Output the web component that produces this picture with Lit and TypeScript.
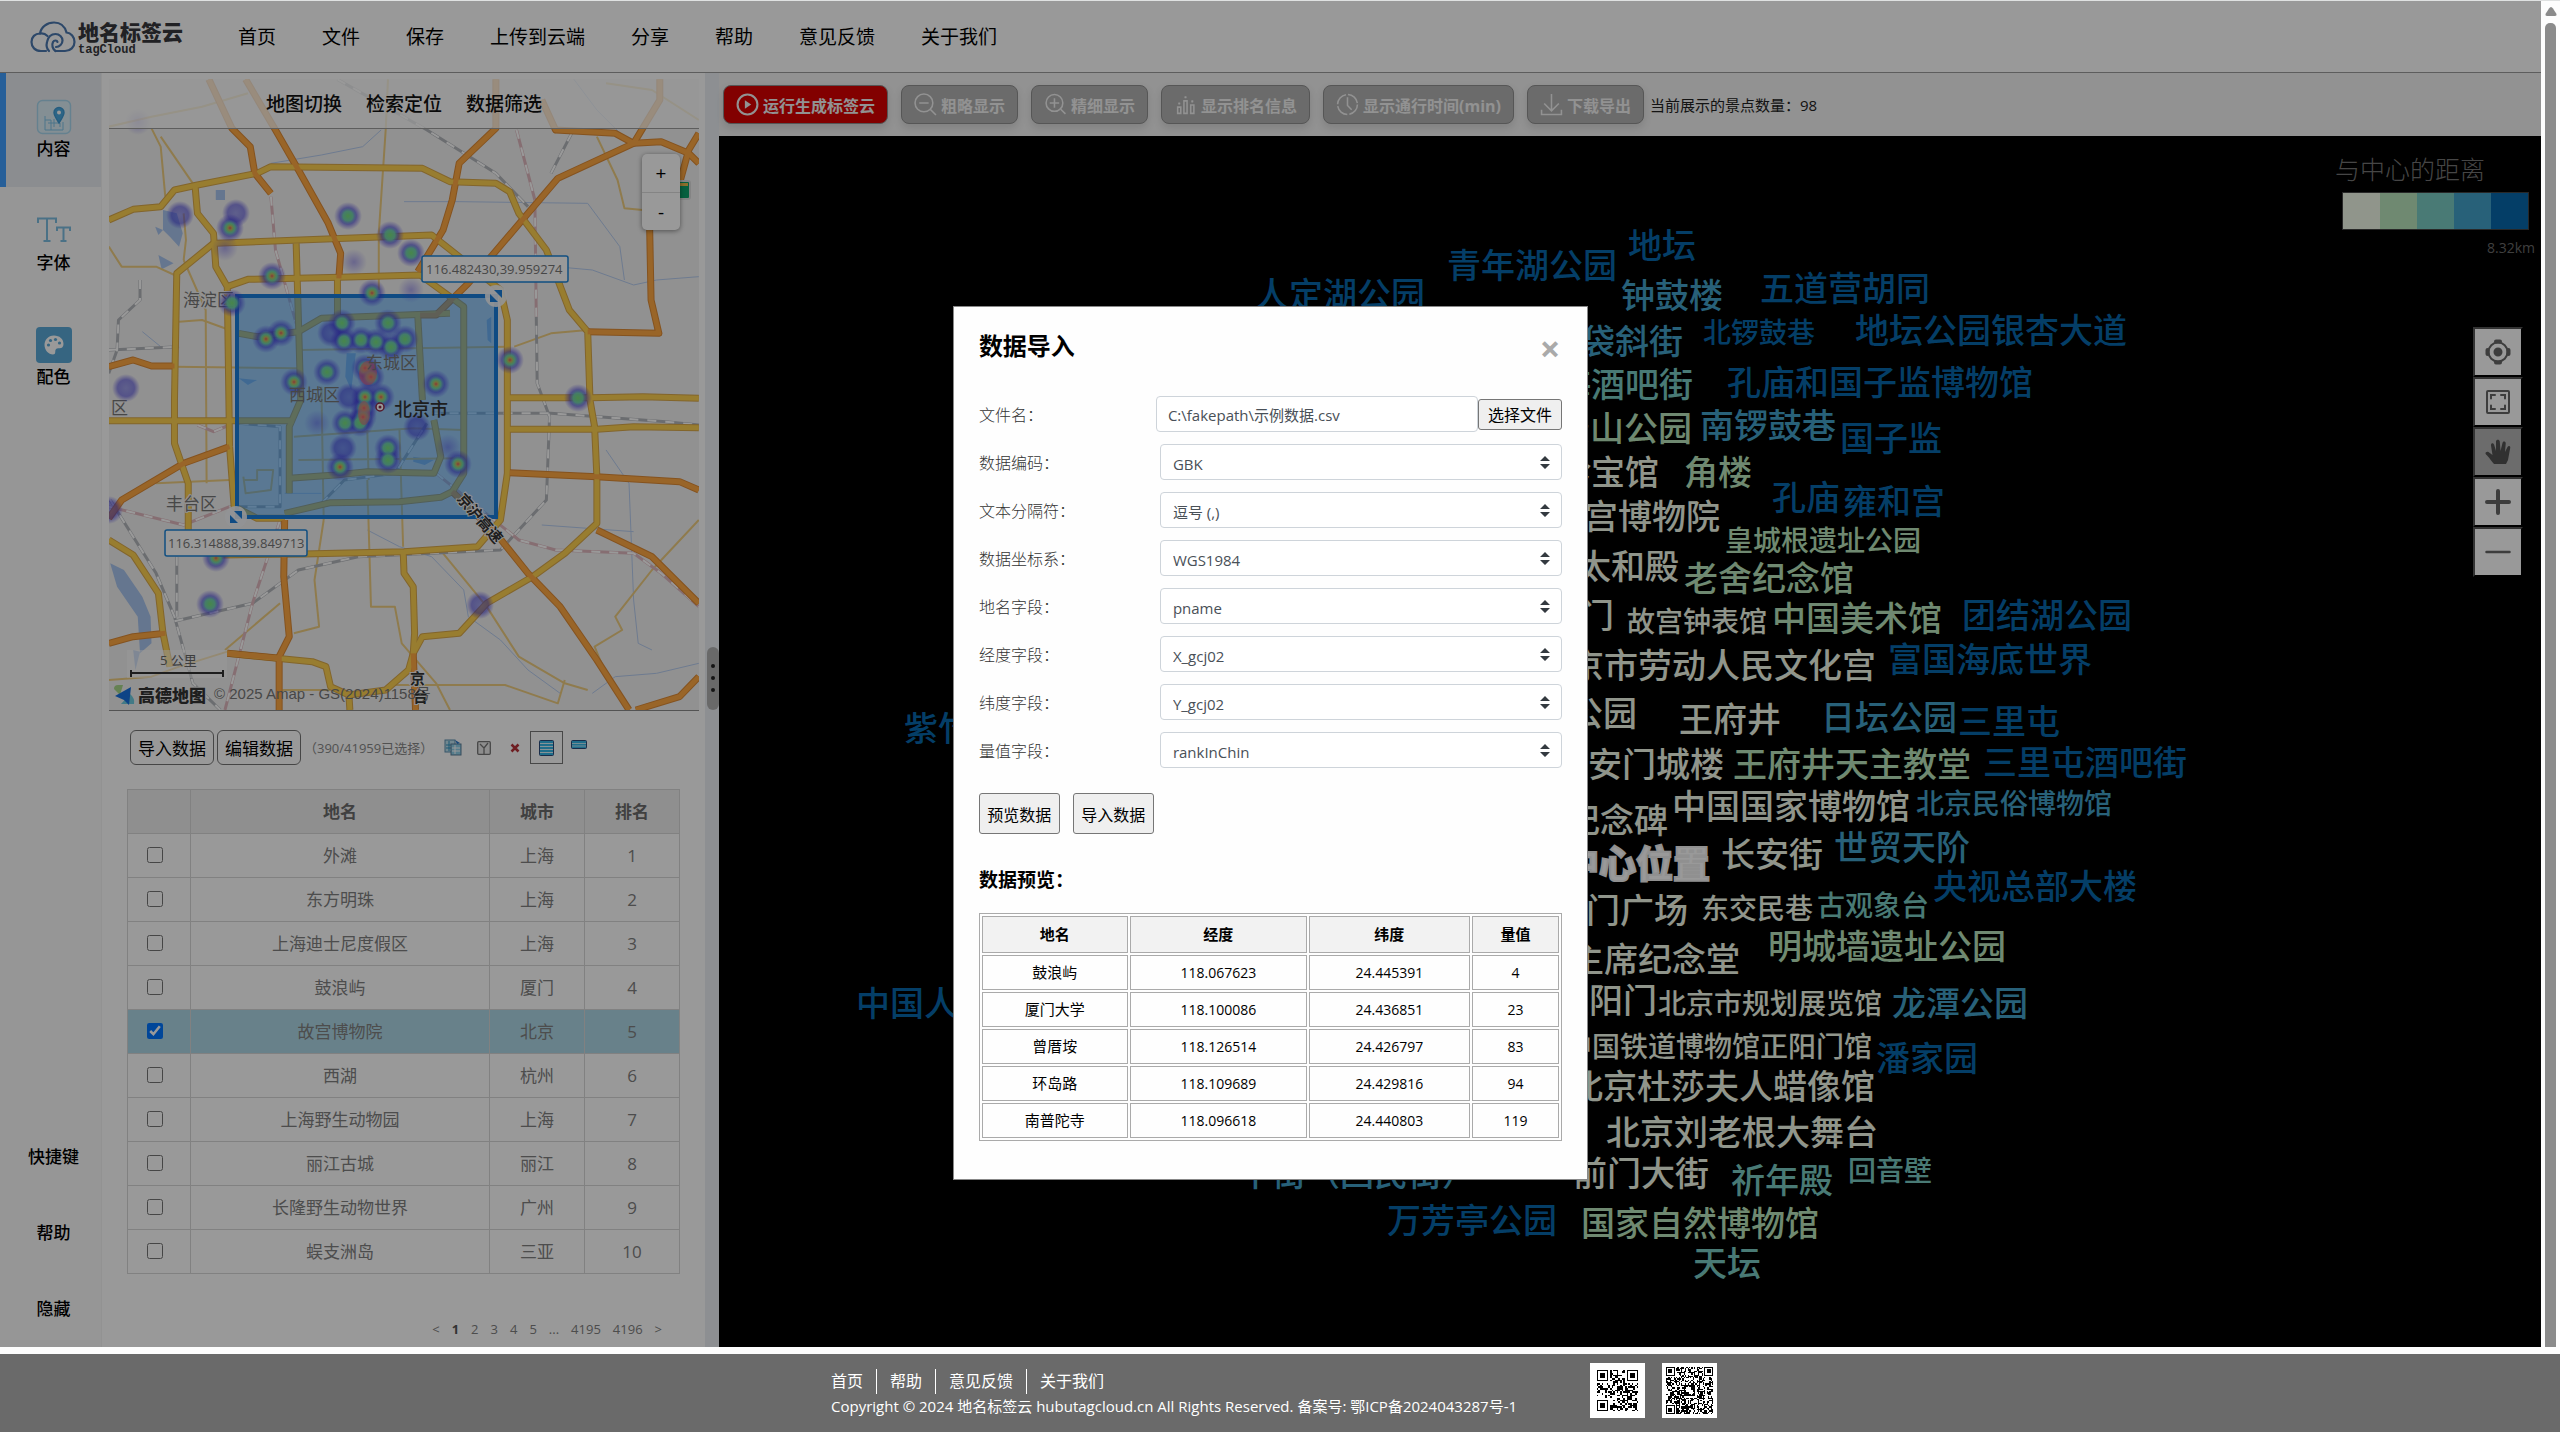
import { LitElement, html, svg, css } from "lit";
import { customElement } from "lit/decorators.js";
import { classMap } from "lit/directives/class-map.js";
import { styleMap } from "lit/directives/style-map.js";

const base = css`
  *, *::before, *::after { box-sizing: border-box; }
  :host { font-family: "Open Sans", "Noto Sans CJK SC", sans-serif; color: #000; }
  button, input, select { font-family: inherit; margin: 0; }
  button { cursor: pointer; }
  a { color: inherit; text-decoration: none; }
  svg { display: block; }
`;

/* ---------- top navigation ---------- */

@customElement("site-header")
class SiteHeader extends LitElement {
  static styles = [base, css`
    :host { display: block; }
    .bar { display: flex; align-items: center; height: 72px; padding-left: 30px; background: #fff; border-bottom: 1px solid #9c9c9c; }
    .logo { display: flex; align-items: center; gap: 2px; width: 208px; }
    .cloud { width: 46px; height: 32px; }
    .brand { display: flex; flex-direction: column; gap: 2px; padding-top: 4px; }
    .name { font-size: 21px; line-height: 22px; font-weight: 900; color: #38383c; white-space: nowrap; }
    .sub { font: bold 12px/11px "Liberation Mono", monospace; color: #38383c; }
    .nav { display: flex; gap: 46px; font-size: 19px; line-height: 28px; white-space: nowrap; }
  `];
  render() {
    const items = ["首页", "文件", "保存", "上传到云端", "分享", "帮助", "意见反馈", "关于我们"];
    return html`
      <header class="bar">
        <a class="logo" href="#">
          <svg class="cloud" viewBox="0 0 46 32" fill="none" stroke="#4b78b0" stroke-width="2.2" stroke-linecap="round">
            <path d="M16 30H11C5 30 1.500 26 1.500 21S5 12.500 10 12.500C11 6 17 1.500 24 1.500S35 6 36.500 11.500C41 12 44.500 16 44.500 21S40.500 30 35 30H30" />
            <path d="M10 12.500c3-.5 5.500.5 7.500 2.500" />
            <path d="M19 30c-2-2-3-5-2-9 1-4.500 4-8 8.500-8 4 0 7 3 7 6.500S29.500 26 26 26" />
            <path d="M25.500 30c-3-2-4-6-2.500-9 1-2 4-2 4.500 0" />
            <path d="M25.500 30h4" />
          </svg>
          <span class="brand"><span class="name">地名标签云</span><span class="sub">tagCloud</span></span>
        </a>
        <nav class="nav">${items.map((t) => html`<a href="#">${t}</a>`)}</nav>
      </header>`;
  }
}

/* ---------- left icon bar ---------- */

@customElement("side-bar")
class SideBar extends LitElement {
  static styles = [base, css`
    :host { display: flex; flex-direction: column; background: #fafafa; border-right: 1px solid #f3f3f3; }
    .tab { display: flex; flex-direction: column; align-items: center; gap: 4px; height: 114px; padding: 26px 0 0 6px; font-size: 17px; line-height: 20px; font-weight: 500; border: 0; background: none; }
    .tab.active { background: #e8ebf0; border-left: 6px solid #409eff; padding-left: 0; }
    .icon { width: 36px; height: 36px; }
    .links { margin-top: auto; padding-bottom: 2px; display: flex; flex-direction: column; font-weight: 500; }
    .link { height: 76px; display: flex; align-items: center; justify-content: center; font-size: 17px; padding-left: 6px; }
  `];
  render() {
    return html`
      <button class="tab active">
        <svg class="icon" viewBox="0 0 36 36" fill="none" stroke="#7fc4e8" stroke-width="1.400">
          <rect x="1.500" y="1.500" width="33" height="33" rx="5" fill="#dceef7" stroke="#a8d8ee" />
          <path d="M9 17v14h18v-8M9 21h6v10M12 24h12v4M18 20v8" stroke-width="1" />
          <path d="M23 24c-3-5-5-7.500-5-10.500a5 5 0 0 1 10 0C28 16.500 26 19 23 24z" fill="#4aa9e0" stroke="#3f9bd4" />
          <circle cx="23" cy="13.500" r="2" fill="#fff" stroke="none" />
        </svg>内容
      </button>
      <button class="tab">
        <svg class="icon" viewBox="0 0 36 36" fill="none" stroke="#7cbce0" stroke-width="2">
          <path d="M2 10V5.500h18V10M11 5.500V28M7.500 28h7M21 18v-3.500h13V18M27.500 14.500V28M24.500 28h6" />
        </svg>字体
      </button>
      <button class="tab">
        <svg class="icon" viewBox="0 0 36 36">
          <rect width="36" height="36" rx="4" fill="#5aa9d8" />
          <path d="M18 8.500c-6 0-9.500 4.500-9.500 9.500s4 9.500 8.500 9.500c3 0 2-3 2.500-4.500.6-1.500 2-1.700 4-1.700 2.500 0 4-1.500 4-4.300 0-5-4-8.500-9.500-8.500z" fill="#fff" />
          <circle cx="12.500" cy="18" r="1.600" fill="#5aa9d8" /><circle cx="14.500" cy="13.500" r="1.600" fill="#5aa9d8" />
          <circle cx="19.500" cy="12.500" r="1.600" fill="#5aa9d8" /><circle cx="23.500" cy="16" r="1.600" fill="#5aa9d8" />
        </svg>配色
      </button>
      <nav class="links">${["快捷键", "帮助", "隐藏"].map((t) => html`<a class="link" href="#">${t}</a>`)}</nav>`;
  }
}

/* ---------- map ---------- */

const motorways = [
  "455,238 505,385 545,440 555,520 590,580", "535,238 600,390 650,510 715,670 742,760 738,835",
  "1080,238 1080,385 1000,490 985,600 965,690 910,815",
  "1437,238 1437,300 1380,430 1215,535 1150,640 1020,850 950,945 915,945",
  "1180,300 1210,390 1340,400 1380,430 1440,425 1500,460 1522,490", "1522,400 1500,450 1480,550",
  "1415,690 1418,900 1435,1000 1280,995", "237,1100 290,1080 330,1098 380,1098",
  "237,1555 265,1500 400,1390 500,1340", "1110,1418 1300,1430 1480,1445 1522,1470",
  "620,1560 618,1730 630,1910 608,1970 608,2130",
  "985,1475 1080,1600 1150,1720 1220,1820 1300,1980 1370,2130", "1300,1590 1420,1670 1522,1810",
  "237,1930 290,1910 360,1900", "1385,2130 1480,2090 1522,2030", "495,1960 610,1975", "900,1960 905,2130",
];
const ringRoads = [
  "237,660 290,628 350,620 380,570 430,555 560,520 590,500 920,505 980,545 1080,550 1110,575 1130,640 1190,750 1240,930 1280,995 1285,1200 1295,1280 1300,1430 1300,1570 1230,1660 1160,1730 1060,1810 1000,1900 920,1910 900,1960 890,2010 840,2070 760,2085 720,2060 710,2000 680,1985 495,1960",
  "425,560 430,640 465,700 470,800 495,860 500,1340 510,1520 560,1555 620,1555",
  "470,730 940,705 1000,770 1090,870 1105,960 1105,1420 1090,1560 1040,1640 880,1655 660,1662 480,1665",
  "645,730 650,960 655,1200 630,1280 630,1480", "465,730 385,820 380,1200 380,1330 410,1450 410,1600",
  "495,860 540,838 740,832 915,825 1010,920 1010,1420 985,1475 960,1492 870,1505 720,1508 620,1540",
  "735,830 735,960", "520,1000 560,1010 650,995 700,955 980,940", "910,950 920,1200", "237,1262 640,1262",
  "630,1435 730,1425 800,1415 945,1420 960,1370 945,1260", "1105,1288 1300,1288 1380,1280 1522,1283",
  "1105,1193 1285,1193 1400,1190 1522,1195", "237,1620 290,1665 345,1780 355,1900 370,2000",
  "878,1650 880,1720 900,1760 903,1900 900,1960", "760,2085 762,2130",
];
const streets = [
  "330,385 350,440 360,590", "350,410 420,550", "845,238 840,390 825,700 825,870", "400,780 448,930 450,1450",
  "1300,410 1345,540 1360,625 1400,630", "390,965 440,960 500,990", "380,1100 650,1105", "650,1050 1105,1040",
  "1120,1040 1200,1000 1280,990", "800,1440 808,1820 860,1820 875,1930 950,2050 980,2130", "870,1290 878,1640",
  "705,1560 685,1740 695,1880 640,1900", "965,1660 1060,1820 1130,1970 1230,2050 1280,2070",
  "1522,1560 1420,1710 1340,1850 1355,1890 1295,1940 1310,1990", "610,1810 490,1950", "615,2070 720,2070",
  "860,2055 1100,2055 1215,2110 1230,2040", "340,1450 500,1440", "237,740 265,800 340,800 380,825",
  "640,1310 900,1285 1010,1290", "400,640 405,720 400,780", "237,2040 330,2030 390,2000 495,1955",
  "530,1430 535,1480 590,1470 595,1410 560,1410 560,1440 530,1440", "700,1160 705,1560", "650,1380 1010,1375",
  "800,1290 803,1440", "237,380 330,350 440,320 540,280", "1180,300 1210,400", "1320,250 1420,270 1522,360",
];
const railways = [
  "735,238 930,390 1080,520 1150,620", "1245,400 1200,520", "305,840 305,900 258,960 255,1050 237,1120",
  "237,1050 390,1040", "240,1500 340,1720 380,1850 420,2050 480,2130",
  "380,1864 550,1810 650,1710 780,1670 1090,1650 1190,1500 1197,1250 1170,1150 1168,950",
  "940,1240 1200,1240 1450,1265 1522,1275", "700,1510 750,1440 860,1420 930,1270",
  "500,1520 610,1520 610,1280 520,1270", "385,1670 385,1850",
];
const pinkRails = [
  "590,590 600,750 645,970", "1125,390 1165,600 1168,950", "237,1520 400,1575 500,1520",
  "610,1560 550,1810 490,2130", "950,1420 1130,1620 1210,1650 1380,1660 1440,1720 1522,1820", "430,1275 465,1295 500,1275",
];
const rivers = [
  "590,490 700,465 790,440 830,390", "880,605 1000,605 1280,610 1350,740 1360,840",
  "1210,800 1290,810 1380,855 1430,840 1522,830", "1250,238 1300,330 1380,440",
  "1320,1350 1370,1450 1380,1800 1390,1930 1420,1950", "1290,2080 1340,2030 1430,2020 1522,1990",
  "940,1670 1010,1770 1020,1850 1090,1920 1150,2010 1220,2080", "1180,1575 1380,1595", "700,1480 620,1480",
  "800,1590 870,1640 940,1670", "350,1040 310,995",
];
const lakes = [
  "355,630 385,640 398,700 390,740 370,710 355,690", "338,680 355,690 345,705", "345,765 378,790 352,808",
  "240,1690 270,1710 310,1790 328,1850 330,1930 305,1960 300,1850 255,1760", "470,570 490,570 490,600 470,600",
  "755,1060 775,1060 765,1170 752,1130", "520,1135 560,1140 540,1155", "1060,960 1070,950 1070,1030 1062,1020",
  "900,1370 945,1380 925,1395 900,1385", "290,1950 305,1955 295,2010",
];

/* x, y and strength (1 weak blue, 2 ring, 3 green, 4 red) of each heat point */
const heat: [number, number, number][] = [
  [393, 645, 2], [515, 640, 2], [502, 685, 4], [758, 647, 3], [850, 705, 3], [895, 760, 3], [593, 828, 4],
  [810, 878, 4], [505, 908, 3], [580, 1018, 4], [613, 1000, 4], [745, 970, 3], [845, 970, 3], [722, 1000, 2],
  [750, 1022, 3], [787, 1020, 3], [818, 1027, 3], [852, 1040, 3], [882, 1018, 3], [712, 1115, 3], [640, 1145, 4],
  [950, 1152, 4], [795, 1105, 4], [808, 1130, 4], [795, 1190, 4], [830, 1190, 4], [1110, 1080, 4], [1258, 1195, 3],
  [300, 365, 1], [490, 745, 1], [770, 785, 1], [895, 870, 1], [275, 1165, 2], [792, 1225, 4], [790, 1250, 4],
  [752, 1270, 3], [785, 1270, 3], [908, 1282, 2], [747, 1343, 2], [741, 1400, 4], [845, 1345, 3], [845, 1380, 3],
  [998, 1393, 4], [470, 1675, 4], [457, 1812, 3], [1045, 1815, 2], [690, 1270, 1], [975, 1340, 1], [760, 1190, 2], [237, 1530, 2],
];
const line = (cls: string) => (p: string) => svg`<polyline class=${cls} points=${p} />`;
const hx = (x: number) => Math.round(x / 2.178 - 109);
const hy = (y: number) => Math.round(y / 3 - 79);

@customElement("heat-map")
class HeatMap extends LitElement {
  static styles = [base, css`
    :host { display: block; }
    .map { position: relative; border-bottom: 1px solid #8a8a8a; }
    .canvas { width: 100%; aspect-ratio: 590 / 631; background: #f2f2f2; }
    polyline { fill: none; vector-effect: non-scaling-stroke; stroke-linejoin: round; }
    .case { stroke: #d9a84a; stroke-width: 7; } .ring { stroke: #fdd050; stroke-width: 5; }
    .mcase { stroke: #dd8a35; stroke-width: 7; } .motor { stroke: #ffa843; stroke-width: 5; }
    .street { stroke: #efcd80; stroke-width: 2; }
    .rail { stroke: #b3b6bb; stroke-width: 3; } .raildash { stroke: #fff; stroke-width: 2; stroke-dasharray: 9 9; }
    .pink { stroke: #dfb8bf; stroke-width: 3; }
    .river { stroke: #b7cdf0; stroke-width: 1; }
    .lake { fill: #a9c5ee; }
    .district { font-size: 17px; fill: #777; stroke: #f2f2f2; stroke-width: 2; paint-order: stroke; }
    .city { font-size: 18px; font-weight: 500; fill: #333; }
    .road { font-size: 15px; font-weight: 700; fill: #333; stroke: #f2f2f2; stroke-width: 2; paint-order: stroke; }
    .coord { fill: #fff; stroke: #1d84d8; stroke-width: 1.5; } .coordtext { font-size: 13px; fill: #777; }
    .area { fill: #1791fc; fill-opacity: 0.42; stroke: #1a7edb; stroke-width: 4; }
    .credit { font: 15px "Liberation Sans", "Noto Sans CJK SC", sans-serif; fill: #777; }
    .amap { font-size: 17px; font-weight: 900; fill: #333; stroke: #f2f2f2; stroke-width: 2; paint-order: stroke; }
    .scale { font-size: 13px; fill: #666; }
    .head { position: absolute; inset: 0 0 auto; height: 50px; display: flex; justify-content: center; align-items: center; gap: 24px; background: rgba(255, 255, 255, 0.75); border-bottom: 1px solid #9c9c9c; font-size: 19px; line-height: 28px; font-weight: 500; color: #111; }
    .zoom { position: absolute; top: 75px; right: 19px; width: 38px; display: flex; flex-direction: column; background: #fff; border-radius: 5px; box-shadow: 0 1px 5px rgba(0, 0, 0, 0.45); }
    .zoom button { height: 38px; border: 0; background: none; font-size: 19px; padding: 0; }
    .zoom button + button { border-top: 1px solid #ddd; }
  `];
  render() {
    return html`
      <div class="map">
        <svg class="canvas" viewBox="0 0 590 631" preserveAspectRatio="xMidYMin slice">
          <defs>
            <radialGradient id="weak"><stop offset="0" stop-color="#4a3ce0" stop-opacity=".4" /><stop offset="1" stop-color="#4a3ce0" stop-opacity="0" /></radialGradient>
            <radialGradient id="blue"><stop offset="0" stop-color="#4a4ce0" stop-opacity=".5" /><stop offset=".6" stop-color="#3a34d8" stop-opacity=".55" /><stop offset="1" stop-color="#4a3ce0" stop-opacity="0" /></radialGradient>
            <radialGradient id="green"><stop offset="0" stop-color="#78e07a" /><stop offset=".55" stop-color="#6fd8a8" stop-opacity=".9" /><stop offset="1" stop-color="#5a80e0" stop-opacity="0" /></radialGradient>
            <radialGradient id="red"><stop offset="0" stop-color="#f0405a" stop-opacity=".85" /><stop offset=".4" stop-color="#e8a850" stop-opacity=".7" /><stop offset="1" stop-color="#9be060" stop-opacity="0" /></radialGradient>
          </defs>
          <g transform="translate(-109 -79) scale(.45914 .33333)">
            ${lakes.map((p) => svg`<polygon class="lake" points=${p} />`)}
            ${rivers.map(line("river"))}${streets.map(line("street"))}
            ${railways.map(line("rail"))}${railways.map(line("raildash"))}
            ${pinkRails.map(line("pink"))}${pinkRails.map(line("raildash"))}
            ${ringRoads.map(line("case"))}${motorways.map(line("mcase"))}
            ${ringRoads.map(line("ring"))}${motorways.map(line("motor"))}
          </g>
          <rect class="area" x="128" y="217" width="259" height="221" />
          <text class="district" x="74" y="227">海淀区</text><text class="district" x="57" y="431">丰台区</text>
          <text class="district" x="2" y="335">区</text>
          ${heat.map(([x, y, s]) => svg`<circle cx=${hx(x)} cy=${hy(y)} r=${s === 1 ? 13 : 14} fill=${s === 1 ? "url(#weak)" : "url(#blue)"} />`)}
          ${heat.filter((h) => h[2] > 2).map(([x, y]) => svg`<circle cx=${hx(x)} cy=${hy(y)} r="9" fill="url(#green)" />`)}
          ${heat.filter((h) => h[2] > 3).map(([x, y]) => svg`<circle cx=${hx(x)} cy=${hy(y)} r="5" fill="url(#red)" />`)}
          <ellipse cx="259" cy="294" rx="9" ry="12" fill="#e8607c" opacity=".6" /><ellipse cx="255" cy="334" rx="6" ry="12" fill="#e8607c" opacity=".55" />
          <text class="district" x="257" y="290" stroke-opacity="0">东城区</text><text class="district" x="180" y="322" stroke-opacity="0">西城区</text>
          <text class="city" x="285" y="337">北京市</text>
          <circle cx="271" cy="328" r="4" fill="#fff" stroke="#8a2b4a" stroke-width="1.500" /><circle cx="271" cy="328" r="1.500" fill="#8a2b4a" />
          <g transform="translate(387 217)"><circle r="11" fill="#f4f6fa" opacity=".9" /><path d="M-2-6h8v8zM2 6h-8v-8z" fill="#1a7edb" /></g>
          <g transform="translate(127 438)"><circle r="11" fill="#f4f6fa" opacity=".9" /><path d="M-2-6h8v8zM2 6h-8v-8z" fill="#1a7edb" /></g>
          <rect class="coord" x="313" y="177" width="146" height="26" rx="2" /><text class="coordtext" x="317" y="195">116.482430,39.959274</text>
          <rect class="coord" x="56" y="451" width="142" height="26" rx="2" /><text class="coordtext" x="59" y="469">116.314888,39.849713</text>
          <g transform="translate(351 417) rotate(49)"><text class="road" x="0" y="5">京沪高速</text></g>
          <text class="road" x="301" y="605">京</text><text class="road" x="304" y="623">台</text>
          <rect x="567" y="102" width="14" height="18" rx="2" fill="#0aa06a" stroke="#ddd" stroke-width="2" /><path d="M570 104h9v3h-9z" fill="#e8b84a" />
          <rect x="18" y="571" width="100" height="28" fill="#fff" opacity=".5" />
          <text class="scale" x="51" y="586">5 公里</text><path d="M22 594h92M22 591v7M114 591v7" stroke="#333" stroke-width="2" />
          <path d="M5 610q0-4 4-4h5l-3 10z" fill="#a8d88a" /><path d="M12 625h13q1-6-4-10z" fill="#6fcbe0" /><path d="M6 617l16-9-2 18-5-5z" fill="#1671e0" />
          <text class="amap" x="29" y="623">高德地图</text>
          <text class="credit" x="105" y="620">© 2025 Amap - GS(2024)1158号</text>
        </svg>
        <div class="head"><span>地图切换</span><span>检索定位</span><span>数据筛选</span></div>
        <div class="zoom"><button aria-label="放大">+</button><button aria-label="缩小">-</button></div>
      </div>`;
  }
}

/* ---------- data table panel ---------- */

const places: [string, string][] = [
  ["外滩", "上海"], ["东方明珠", "上海"], ["上海迪士尼度假区", "上海"], ["鼓浪屿", "厦门"], ["故宫博物院", "北京"],
  ["西湖", "杭州"], ["上海野生动物园", "上海"], ["丽江古城", "丽江"], ["长隆野生动物世界", "广州"], ["蜈支洲岛", "三亚"],
];

@customElement("data-panel")
class DataPanel extends LitElement {
  static styles = [base, css`
    :host { display: flex; flex-direction: column; background: #fff; padding: 6px 6px 0 7px; min-width: 0; }
    .tools { display: flex; align-items: center; padding: 19px 21px 24px; }
    .btn { height: 35px; padding: 0 7px; margin-right: 3px; border: 1px solid #767676; border-radius: 6px; background: #fff; font-size: 17px; white-space: nowrap; }
    .count { font-size: 13px; color: #888; white-space: nowrap; }
    .ico { width: 31px; height: 33px; padding: 0; border: 0; background: none; display: flex; align-items: center; justify-content: center; }
    .count + .ico { margin-left: 4px; }
    .ico.on { width: 33px; border: 1px solid #777; background: #fff; }
    .grid { margin: 0 19px 0 18px; width: auto; border-collapse: collapse; table-layout: fixed; font-size: 17px; line-height: 20px; color: #808080; }
    .wrap { display: grid; }
    th, td { border: 1px solid #d8d8d8; text-align: center; padding: 11px 0; height: 44px; }
    th { background: #efefef; color: #6c6c6c; font-weight: 700; }
    .sel td { background: #add8e6; }
    .c0 { width: 63px; } .c2, .c3 { width: 95px; }
    td.tick { padding-right: 8px; }
    .box { width: 16px; height: 16px; vertical-align: -1px; }
    .pager { display: flex; justify-content: flex-end; gap: 12px; margin-top: auto; padding: 0 37px 8px 0; font-size: 13px; line-height: 20px; color: #808080; }
    .cur { font-weight: 700; color: #555; }
  `];
  render() {
    return html`
      <heat-map></heat-map>
      <div class="tools">
        <button class="btn">导入数据</button><button class="btn">编辑数据</button>
        <span class="count">（390/41959已选择）</span>
        <button class="ico" aria-label="复制">
          <svg width="18" height="17" viewBox="0 0 18 17"><rect x="1" y="1" width="10" height="12" fill="#bfe2ef" stroke="#5b8fb0" /><path d="M2 6h8M2 9h8M5 2v10" stroke="#2f93c0" /><rect x="7" y="5" width="10" height="11" fill="#8fd0ea" stroke="#5b7f9a" /><path d="M8 9h8M8 12h8M11 6v9" stroke="#fff" /><path d="M11 1l5 3-3 1z" fill="#2476c8" /></svg>
        </button>
        <button class="ico" aria-label="选择">
          <svg width="14" height="14" viewBox="0 0 14 14" fill="none" stroke="#777" stroke-width="1.300"><rect x=".7" y=".7" width="12.600" height="12.600" rx="1" fill="#ececec" /><path d="M3 3l4 4v6M11 2L7 7" /></svg>
        </button>
        <button class="ico" aria-label="删除">
          <svg width="10" height="10" viewBox="0 0 10 10"><path d="M1.500 1.500l7 7M8.500 1.500l-7 7" stroke="#b8323a" stroke-width="2.500" /></svg>
        </button>
        <button class="ico on" aria-label="全部行">
          <svg width="15" height="16" viewBox="0 0 15 16"><rect x=".5" y=".5" width="14" height="15" rx="1" fill="#35b6e6" stroke="#2b4a7a" /><path d="M1 3.500h13M1 6.500h13M1 9.500h13M1 12.500h13" stroke="#dff4fb" /></svg>
        </button>
        <button class="ico" aria-label="部分行">
          <svg width="16" height="16" viewBox="0 0 16 16"><rect x=".5" y=".5" width="15" height="8" rx="1" fill="#35b6e6" stroke="#2b4a7a" /><path d="M1 3.500h14M1 6h14" stroke="#bfe8f6" /></svg>
        </button>
      </div>
      <div class="wrap">
        <table class="grid">
          <thead><tr><th class="c0"></th><th>地名</th><th class="c2">城市</th><th class="c3">排名</th></tr></thead>
          <tbody>
            ${places.map(([name, city], i) => html`
              <tr class=${classMap({ sel: i === 4 })}>
                <td class="tick"><input class="box" type="checkbox" aria-label=${name} .checked=${i === 4} /></td>
                <td>${name}</td><td>${city}</td><td>${i + 1}</td>
              </tr>`)}
          </tbody>
        </table>
      </div>
      <nav class="pager">
        ${["<", "1", "2", "3", "4", "5", "...", "4195", "4196", ">"].map((p) => html`<a href="#" class=${classMap({ cur: p === "1" })}>${p}</a>`)}
      </nav>`;
  }
}

/* ---------- word cloud ---------- */

const shades = ["#f0f9e8", "#bae4bc", "#7bccc4", "#43a2ca", "#0868ac"];
/* text, left, vertical centre, shade, size */
type Tag = [string, number, number, number, number?];
const tags: Tag[] = [
  ["地坛", 909, 110, 4], ["青年湖公园", 728, 130, 4], ["钟鼓楼", 902, 160, 3], ["五道营胡同", 1041, 153, 4],
  ["人定湖公园", 536, 159, 4], ["烟袋斜街", 828, 206, 3], ["北锣鼓巷", 984, 197, 4, 28],
  ["地坛公园银杏大道", 1136, 195, 4], ["什刹海酒吧街", 770, 249, 2], ["孔庙和国子监博物馆", 1008, 247, 4],
  ["景山公园", 837, 293, 1], ["南锣鼓巷", 981, 290, 3], ["国子监", 1121, 303, 4], ["珍宝馆", 838, 337, 0],
  ["角楼", 965, 337, 1], ["孔庙", 1053, 362, 4], ["雍和宫", 1124, 366, 4], ["故宫博物院", 831, 381, 0],
  ["皇城根遗址公园", 1006, 405, 1, 28], ["太和殿", 858, 431, 0], ["老舍纪念馆", 965, 443, 1], ["午门", 827, 480, 0],
  ["故宫钟表馆", 908, 486, 0, 28], ["中国美术馆", 1053, 483, 1], ["团结湖公园", 1243, 480, 4],
  ["北京市劳动人民文化宫", 817, 530, 0], ["富国海底世界", 1169, 524, 4], ["中山公园", 782, 578, 0],
  ["王府井", 960, 584, 0], ["日坛公园", 1102, 582, 3], ["三里屯", 1239, 586, 4], ["紫竹院公园", 185, 593, 4],
  ["天安门城楼", 835, 629, 0], ["王府井天主教堂", 1014, 629, 1], ["三里屯酒吧街", 1264, 627, 4],
  ["人民英雄纪念碑", 711, 685, 0], ["中国国家博物馆", 953, 671, 0], ["北京民俗博物馆", 1197, 668, 3, 28],
  ["长安街", 1002, 719, 0], ["世贸天阶", 1115, 712, 3], ["央视总部大楼", 1214, 751, 4],
  ["天安门广场", 799, 775, 0], ["东交民巷", 982, 773, 0, 28], ["古观象台", 1098, 770, 2, 28],
  ["明城墙遗址公园", 1049, 811, 1], ["毛主席纪念堂", 817, 824, 0], ["中国人民革命军事博物馆", 137, 868, 4],
  ["正阳门", 836, 865, 0], ["北京市规划展览馆", 939, 868, 0, 28], ["龙潭公园", 1173, 868, 3],
  ["中国铁道博物馆正阳门馆", 845, 911, 0, 28], ["潘家园", 1157, 923, 4], ["北京杜莎夫人蜡像馆", 850, 951, 0],
  ["北京刘老根大舞台", 887, 997, 0], ["前门大街", 854, 1038, 0], ["牛街（回民街）", 519, 1038, 3],
  ["祈年殿", 1012, 1045, 2], ["回音壁", 1129, 1035, 2, 28], ["万芳亭公园", 668, 1085, 4],
  ["国家自然博物馆", 862, 1088, 1], ["天坛", 974, 1128, 2],
];

@customElement("cloud-view")
class CloudView extends LitElement {
  static styles = [base, css`
    :host { display: flex; flex-direction: column; background: #f3f3f3; min-width: 0; }
    .toolbar { display: flex; align-items: center; gap: 13px; padding: 12px 4px; }
    .act { display: flex; align-items: center; gap: 4px; height: 39px; padding: 0 12px; border: 1px solid #8f8f8f; border-radius: 8px; background: #b2b2b2; color: #f3f3f3; font-size: 16px; font-weight: 700; white-space: nowrap; box-shadow: 0 4px 8px rgba(0, 0, 0, 0.12); }
    .act.run { background: #d90000; }
    .act svg { width: 23px; height: 23px; fill: none; stroke: currentColor; stroke-width: 1.5; }
    .info { margin-left: -7px; font-size: 15px; line-height: 22px; white-space: nowrap; color: #222; }
    .stage { position: relative; flex: 1; background: #000; overflow: hidden; }
    .tag { position: absolute; line-height: 40px; margin-top: -22px; white-space: nowrap; font-family: "Noto Sans CJK SC", sans-serif; font-weight: 500; }
    .centre { position: absolute; left: 843px; top: 708px; font-size: 37px; line-height: 40px; font-weight: 900; color: #fff; -webkit-text-stroke: 2px #f0f0f0; white-space: nowrap; }
    .legend { position: absolute; top: 16px; right: 6px; display: flex; flex-direction: column; align-items: flex-end; color: #767676; }
    .title { font-size: 25px; line-height: 34px; font-weight: 300; margin-right: 50px; }
    .ramp { display: flex; margin: 6px 6px 0 0; border: 1px solid #444; }
    .cell { width: 37px; height: 36px; }
    .km { font-size: 14px; line-height: 20px; margin-top: 8px; color: #6a6a6a; }
    .ctl { position: absolute; top: 191px; right: 18px; display: flex; flex-direction: column; }
    .ctl button { width: 50px; height: 50px; padding: 0; display: flex; align-items: center; justify-content: center; background: #fff; border: 2px solid; border-color: #555 #000 #000 #555; }
    .ctl .on { background: #b4b4b4; }
    .ctl svg { width: 26px; height: 26px; fill: none; stroke: #666; stroke-width: 2; stroke-linecap: round; }
  `];
  render() {
    return html`
      <div class="toolbar">
        <button class="act run"><svg viewBox="0 0 22 22"><circle cx="11" cy="11" r="9.500" stroke-width="2" /><path d="M8.500 7v8l6-4z" fill="currentColor" stroke="none" /></svg>运行生成标签云</button>
        <button class="act"><svg viewBox="0 0 22 22"><circle cx="9.500" cy="9.500" r="8.500" /><path d="M5 9.500h9M15.500 15.500l5.500 5.500" /></svg>粗略显示</button>
        <button class="act"><svg viewBox="0 0 22 22"><circle cx="10" cy="9.500" r="8" /><path d="M5.500 9.500h9M10 5v9M16 15.500l4.500 4.500" /></svg>精细显示</button>
        <button class="act"><svg viewBox="0 0 22 22" stroke-width="1.300"><path d="M3.500 13.500h3v6h-3zM9.500 7.500h3v12h-3zM16 11.500h3v8h-3zM5 9v2M4 10h2M11 3v2M10 4h2M17.500 7v2M16.500 8h2" /></svg>显示排名信息</button>
        <button class="act"><svg viewBox="0 0 22 22"><circle cx="11" cy="11" r="9.500" stroke-dasharray="13 2" /><path d="M11 4v8l4 4" /></svg>显示通行时间(min)</button>
        <button class="act"><svg viewBox="0 0 22 22"><path d="M11 1v15M4 10l7 7 7-7M1.500 16v4.500h19V16" /></svg>下载导出</button>
        <span class="info">当前展示的景点数量：98</span>
      </div>
      <div class="stage">
        ${tags.map(([text, x, y, shade, size]) => html`<span class="tag"
          style=${styleMap({ left: `${x}px`, top: `${y}px`, color: shades[shade], fontSize: `${size ?? 34}px` })}>${text}</span>`)}
        <span class="centre">中心位置</span>
        <div class="legend">
          <span class="title">与中心的距离</span>
          <div class="ramp">${shades.map((c) => html`<span class="cell" style=${styleMap({ background: c })}></span>`)}</div>
          <span class="km">8.32km</span>
        </div>
        <div class="ctl">
          <button aria-label="定位"><svg viewBox="0 0 26 26"><circle cx="13" cy="13" r="9.500" /><circle cx="13" cy="13" r="3.500" fill="#666" /><path d="M11 2.500h4M11 23.500h4M2.500 11v4M23.500 11v4" stroke-width="4" /></svg></button>
          <button aria-label="全图"><svg viewBox="0 0 26 26"><rect x="2" y="2" width="22" height="22" rx="1" /><path d="M6 9.500V6h4M16 6h4v3.500M20 16.500V20h-4M10 20H6v-3.500" /></svg></button>
          <button class="on" aria-label="拖动"><svg viewBox="0 0 26 26" stroke="none"><path d="M9 25c-2-2-5-7-8-9.500-1.500-1.500.5-3.500 2.500-2.500L7.500 16 6 6.500C5.700 4 8.500 3.500 9.200 6L11 12V2.500c0-2.500 3.500-2.500 3.800 0L15.500 12l2-8c.6-2.200 3.600-1.700 3.200.8L20 13l2.500-5c1-1.800 3.200-1 2.700 1L23 21l-2 4z" fill="#525252" stroke="none" /></svg></button>
          <button aria-label="放大"><svg viewBox="0 0 26 26"><path d="M2 13h22M13 2v22" stroke-width="4" /></svg></button>
          <button aria-label="缩小"><svg viewBox="0 0 26 26"><path d="M1.500 13h23" stroke-width="2.500" /></svg></button>
        </div>
      </div>`;
  }
}

/* ---------- import dialog ---------- */

const fields: [string, string][] = [
  ["数据编码：", "GBK"], ["文本分隔符：", "逗号 (,)"], ["数据坐标系：", "WGS1984"], ["地名字段：", "pname"],
  ["经度字段：", "X_gcj02"], ["纬度字段：", "Y_gcj02"], ["量值字段：", "rankInChin"],
];
const preview = [
  ["鼓浪屿", "118.067623", "24.445391", "4"], ["厦门大学", "118.100086", "24.436851", "23"],
  ["曾厝垵", "118.126514", "24.426797", "83"], ["环岛路", "118.109689", "24.429816", "94"],
  ["南普陀寺", "118.096618", "24.440803", "119"],
];

@customElement("import-dialog")
class ImportDialog extends LitElement {
  static styles = [base, css`
    :host { position: absolute; inset: 0; display: flex; justify-content: center; align-items: flex-start; padding-top: 305px; background: rgba(0, 0, 0, 0.4); z-index: 2; }
    .dialog { width: 25%; min-width: 560px; padding: 25px 25px 38px; background: #fefefe; border: 1px solid #888; }
    .head { display: flex; justify-content: space-between; margin-bottom: 30px; }
    .title { margin: 0; font-size: 24px; line-height: 28px; font-weight: 700; }
    .close { width: 24px; height: 34px; padding: 0; border: 0; background: none; color: #aaa; font-size: 36px; line-height: 34px; font-weight: 700; }
    .form { display: grid; gap: 12px; }
    .row { display: grid; grid-template-columns: 177px 1fr; align-items: center; height: 36px; }
    .label { font-size: 16px; color: #333; font-weight: 300; }
    .file { display: flex; align-items: center; }
    .input { flex: 1; min-width: 0; height: 36px; padding: 0 11px; border: 1px solid #ced4da; border-radius: 4px; font-size: 15px; color: #495057; background: #fff; }
    .pick { height: 31px; width: 84px; padding: 0; font-size: 16px; background: #efefef; border: 1px solid #767676; border-radius: 3px; color: #000; }
    .select { position: relative; margin-left: 4px; }
    .select select { display: block; width: 100%; height: 36px; padding: 3px 12px 0; border: 1px solid #ced4da; border-radius: 4px; font-size: 15px; color: #495057; background: #fff; appearance: none; }
    .arrow { position: absolute; right: 12px; top: 12px; pointer-events: none; }
    .actions { display: flex; gap: 13px; margin-top: 25px; }
    .actions button { height: 41px; width: 81px; padding: 0; font-size: 16px; background: #efefef; border: 1px solid #767676; border-radius: 3px; color: #000; }
    .sub { margin: 33px 0 20px; font-size: 19px; line-height: 26px; font-weight: 700; }
    .table { width: 100%; table-layout: fixed; border: 1px solid #aaa; border-collapse: separate; border-spacing: 2px; font-size: 15px; line-height: 17px; text-align: center; }
    .table th, .table td { border: 1px solid #aaa; padding: 8px 0; }
    .table th { background: #f2f2f2; padding: 9px 0; }
    .table .num { font-size: 14px; }
    .w1 { width: 146px; } .w2 { width: 177px; } .w3 { width: 161px; }
  `];
  render() {
    return html`
      <section class="dialog" role="dialog" aria-labelledby="title">
        <div class="head"><h2 class="title" id="title">数据导入</h2><button class="close" aria-label="关闭">×</button></div>
        <div class="form">
          <div class="row">
            <label class="label" for="file">文件名：</label>
            <div class="file"><input class="input" id="file" type="text" .value=${"C:\\fakepath\\示例数据.csv"} /><button class="pick">选择文件</button></div>
          </div>
          ${fields.map(([label, value], i) => html`
            <div class="row">
              <label class="label" for=${`f${i}`}>${label}</label>
              <div class="select">
                <select id=${`f${i}`}><option>${value}</option></select>
                <svg class="arrow" width="10" height="13" viewBox="0 0 10 13" fill="#343a40"><path d="M5 0l5 5H0zM5 13l5-5H0z" /></svg>
              </div>
            </div>`)}
        </div>
        <div class="actions"><button>预览数据</button><button>导入数据</button></div>
        <h3 class="sub">数据预览：</h3>
        <table class="table">
          <thead><tr><th class="w1">地名</th><th class="w2">经度</th><th class="w3">纬度</th><th>量值</th></tr></thead>
          <tbody>${preview.map((r) => html`<tr>${r.map((c, i) => html`<td class=${i ? "num" : ""}>${c}</td>`)}</tr>`)}</tbody>
        </table>
      </section>`;
  }
}

/* ---------- footer ---------- */

function qrPath(n: number, seed: number, hole: number) {
  let s = seed, d = "";
  const finder = (x: number, y: number) => {
    const m = Math.max(Math.abs(x - 3), Math.abs(y - 3));
    return m === 3 || m <= 1;
  };
  for (let y = 0; y < n; y++) {
    for (let x = 0; x < n; x++) {
      s = (s * 1103515245 + 12345) % 2147483648;
      let on = (s >> 16) % 2 === 0;
      const right = x >= n - 8, low = y >= n - 8;
      if (x < 8 && y < 8) on = x < 7 && y < 7 && finder(x, y);
      else if (right && y < 8) on = x > n - 8 && y < 7 && finder(x - n + 7, y);
      else if (x < 8 && low) on = x < 7 && y > n - 8 && finder(x, y - n + 7);
      if (Math.abs(x - n / 2) < hole && Math.abs(y - n / 2) < hole) on = false;
      if (on) d += `M${x} ${y}h1v1h-1z`;
    }
  }
  return d;
}

@customElement("site-footer")
class SiteFooter extends LitElement {
  static styles = [base, css`
    :host { display: block; }
    .footer { display: flex; justify-content: center; gap: 62px; height: 78px; padding: 9px 12px 0 0; background: #6a6a6a; color: #fff; font-size: 16px; }
    .text { min-width: 697px; }
    .links { display: flex; padding-top: 6px; }
    .links a { line-height: 25px; padding: 0 13px; border-left: 1px solid #fff; }
    .links a:first-child { padding-left: 0; border-left: 0; }
    .copy { margin: 0; font-size: 15px; line-height: 24px; white-space: nowrap; }
    .codes { display: flex; gap: 17px; }
    .qr { width: 55px; height: 55px; background: #fff; shape-rendering: crispEdges; }
  `];
  render() {
    return html`
      <footer class="footer">
        <div class="text">
          <nav class="links">${["首页", "帮助", "意见反馈", "关于我们"].map((t) => html`<a href="#">${t}</a>`)}</nav>
          <p class="copy">Copyright © 2024 地名标签云 hubutagcloud.cn All Rights Reserved. 备案号: 鄂ICP备2024043287号-1</p>
        </div>
        <div class="codes">
          <svg class="qr" viewBox="-4 -4 33 33"><path d=${qrPath(25, 77, 0)} /></svg>
          <svg class="qr" viewBox="-3 -3 43 43"><path d=${qrPath(37, 12345, 5)} /><rect x="14" y="14" width="9" height="9" rx="2" /><circle cx="17.500" cy="17.500" r="2.200" fill="#fff" /><circle cx="20" cy="20" r="1.800" fill="#fff" /></svg>
        </div>
      </footer>`;
  }
}

/* ---------- page ---------- */

@customElement("app-root")
class AppRoot extends LitElement {
  static styles = [base, css`
    :host { display: flex; flex-direction: column; min-height: 100vh; background: #fdfdfd; }
    .view { flex: 1; display: flex; border-top: 1px solid #dfe1e1; margin-bottom: 7px; }
    .page { position: relative; flex: 1; min-width: 0; display: flex; flex-direction: column; }
    .work { flex: 1; display: grid; grid-template-columns: 102px minmax(480px, 603fr) 14px 1822fr; }
    .split { display: flex; align-items: center; justify-content: flex-end; background: #ebeff4; }
    .grip { width: 12px; height: 63px; margin-bottom: 64px; border-radius: 6px; background: #b0b0b0; display: flex; flex-direction: column; align-items: center; justify-content: center; gap: 8px; }
    .dot { width: 4px; height: 4px; border-radius: 2px; background: #222; }
    .scroll { width: 19px; display: flex; flex-direction: column; align-items: center; gap: 7px; padding-top: 6px; }
    .thumb { flex: 1; width: 11px; border-radius: 5px 5px 0 0; background: #8b8b8b; }
  `];
  render() {
    return html`
      <div class="view">
        <div class="page">
          <site-header></site-header>
          <div class="work">
            <side-bar></side-bar>
            <data-panel></data-panel>
            <div class="split"><div class="grip"><i class="dot"></i><i class="dot"></i><i class="dot"></i></div></div>
            <cloud-view></cloud-view>
          </div>
          <import-dialog></import-dialog>
        </div>
        <div class="scroll"><svg width="12" height="9" viewBox="0 0 12 9"><path d="M6 0q1 0 2 1.500L11.500 7q.5 2-1.500 2H2Q0 9 .5 7L4 1.500Q5 0 6 0z" fill="#8b8b8b" /></svg><div class="thumb"></div></div>
      </div>
      <site-footer></site-footer>`;
  }
}
